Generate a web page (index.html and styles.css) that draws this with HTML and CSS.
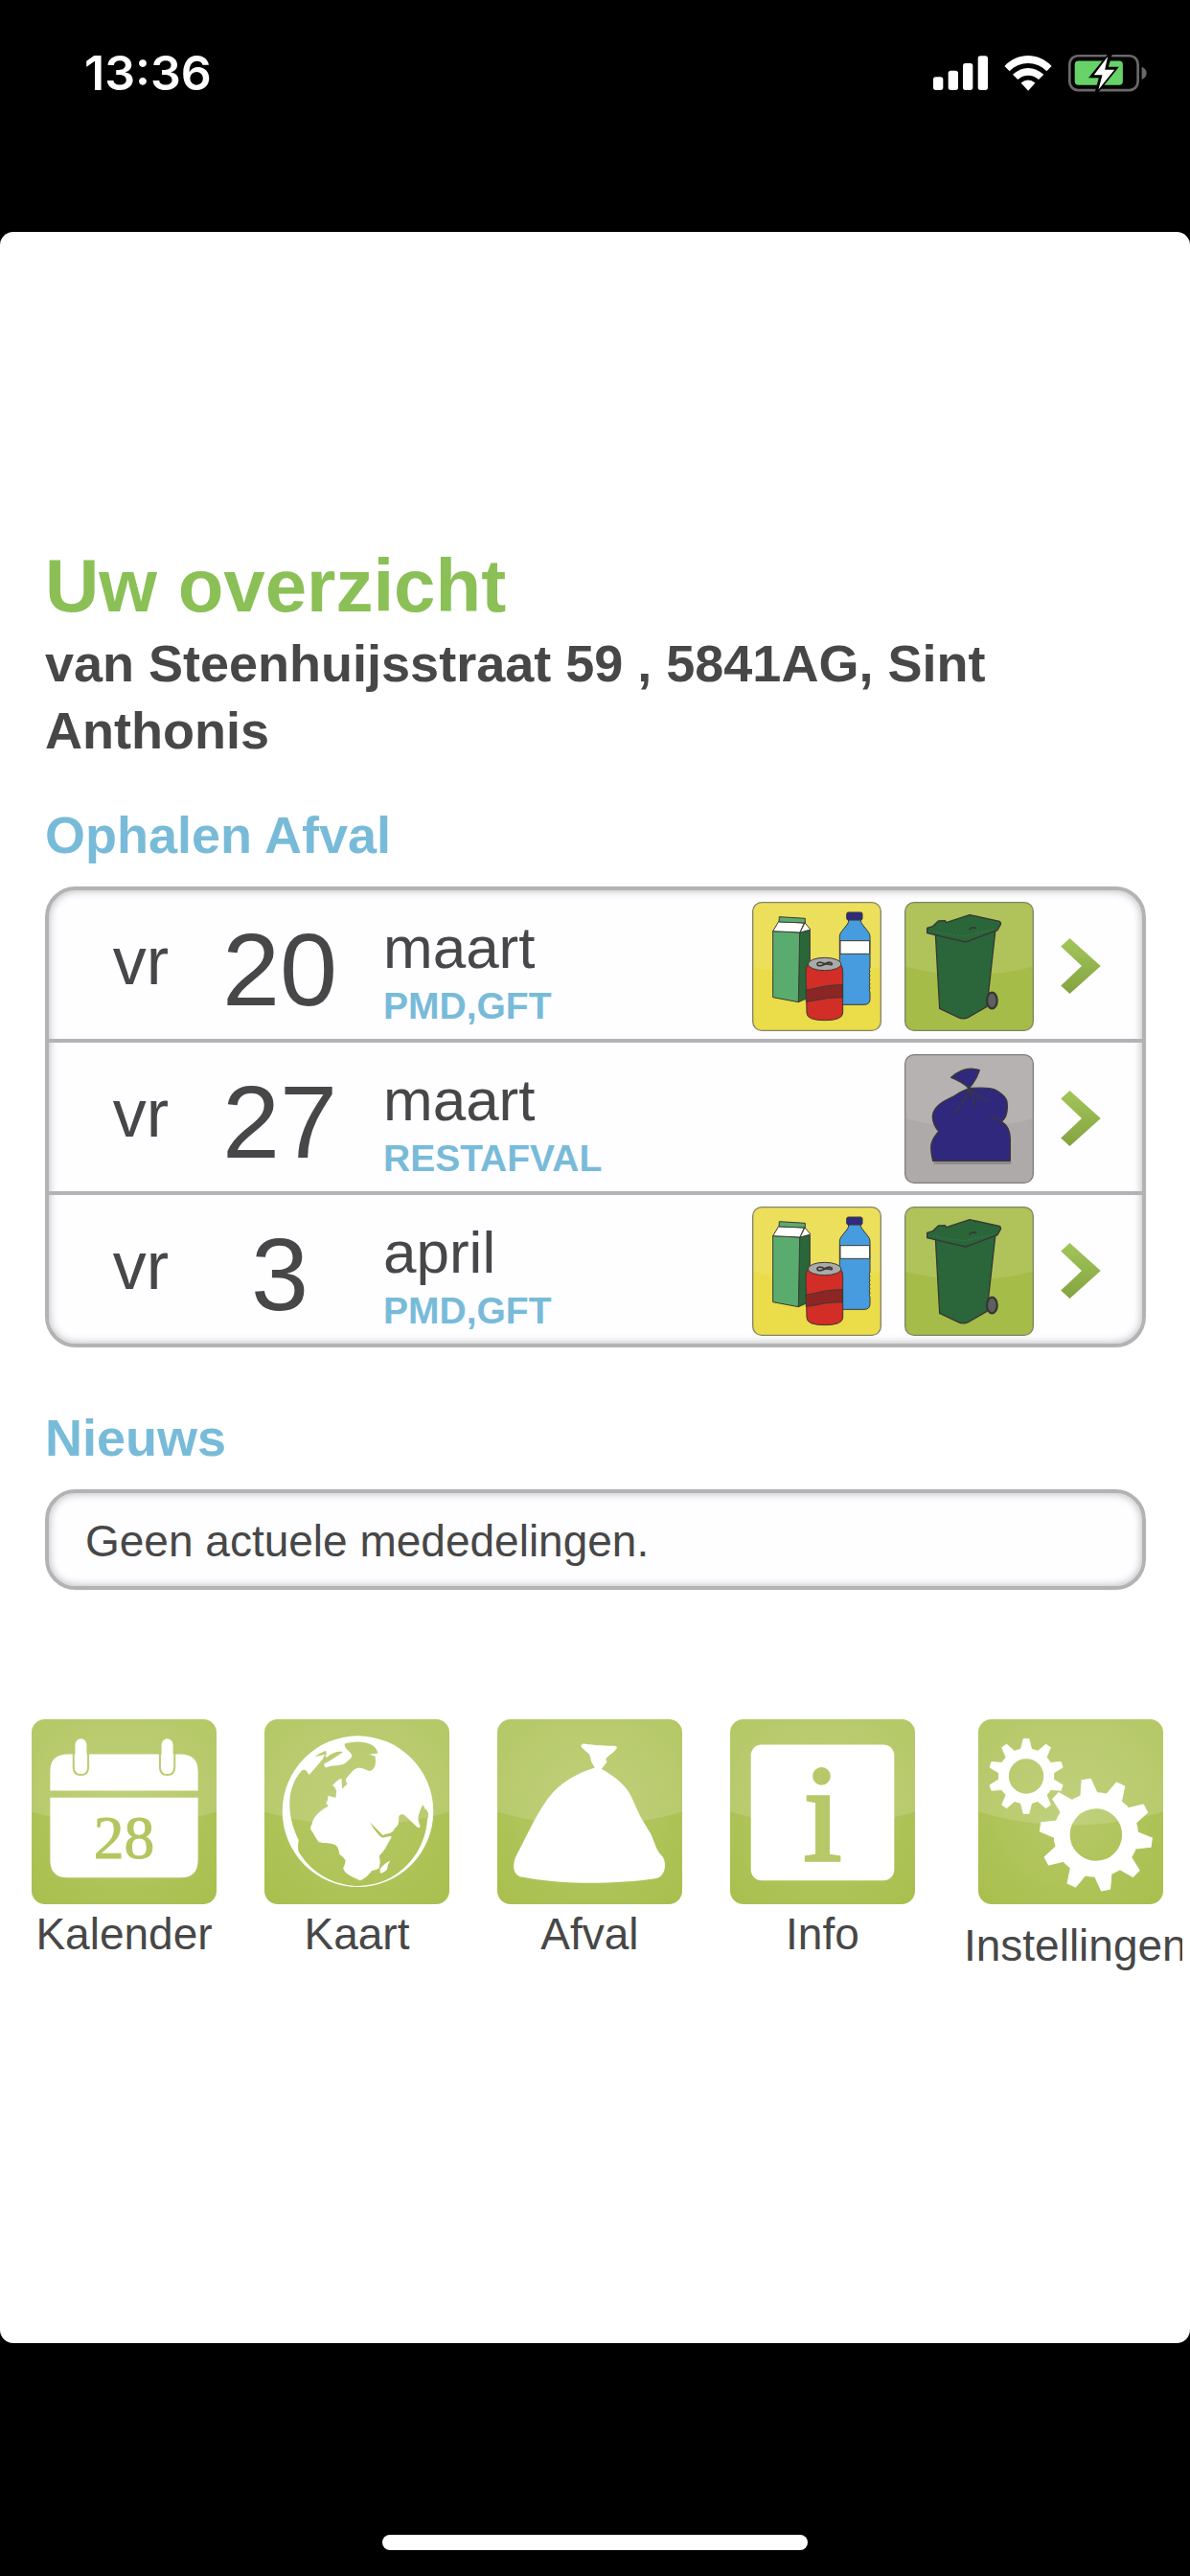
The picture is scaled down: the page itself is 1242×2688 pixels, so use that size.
FILE: index.html
```html
<!DOCTYPE html>
<html lang="nl">
<head>
<meta charset="utf-8">
<meta name="viewport" content="width=device-width, initial-scale=1">
<title>Uw overzicht</title>
<link rel="stylesheet" href="styles.css">
</head>
<body>
<svg class="defs" aria-hidden="true">
  <defs>
    <linearGradient id="arrow-fill" x1="0" y1="0" x2="0" y2="1">
      <stop offset="0" stop-color="#a3c65a"/><stop offset="1" stop-color="#83a340"/>
    </linearGradient>
    <radialGradient id="tile-fill" cx="0.5" cy="0.5" r="0.72">
      <stop offset="0" stop-color="#b6c868"/><stop offset="0.6" stop-color="#aec357"/><stop offset="1" stop-color="#a8be4c"/>
    </radialGradient>
    <symbol id="tile" viewBox="0 0 578 578">
      <rect width="578" height="578" rx="42" fill="url(#tile-fill)"/>
      <path d="M0 42Q0 0 42 0H536Q578 0 578 42V289Q440 331 289 331T0 289Z" fill="#fff" opacity=".14"/>
    </symbol>
    <symbol id="arrow" viewBox="0 0 126 176">
      <path d="M28 0 126 88 28 176 0 150 66 88 0 26Z" fill="url(#arrow-fill)"/>
    </symbol>
    <symbol id="pmd" viewBox="43 32 405 405">
      <rect x="45" y="34" width="401" height="401" rx="28" fill="#ebdc49"/>
      <path d="M45 62Q45 34 73 34H418Q446 34 446 62V235Q350 260 245 260T45 235Z" fill="#ecdf5b"/>
      <g stroke="#3a3a33" stroke-width="3" stroke-linejoin="round">
        <path d="M192 127 224 122V330L188 346Z" fill="#2a6639"/>
        <path d="M108 124 192 128 188 346 108 331Z" fill="#5aab6e"/>
        <path d="M108 124 126 94 206 98 193 128Z" fill="#fff"/>
        <path d="M193 128 208 98 226 119Z" fill="#fff"/>
        <path d="M128 79 209 84V98L127 95Z" fill="#5aab6e"/>
        <path d="M345 88H383Q383 98 389 104L405 124Q412 132 412 140V238Q407 244 412 250 407 257 412 263 407 270 412 276 407 283 412 289 407 296 412 302 407 309 412 316V336Q412 354 394 354H317V140Q317 132 324 124L340 104Q346 97 345 88Z" fill="#469cde"/>
        <path d="M319 154H411V195H319Z" fill="#fff"/>
        <rect x="339" y="65" width="49" height="24" rx="5" fill="#302a80"/>
        <path d="M218 228Q210 238 211 262L214 380Q214 403 270 403T327 380V252Q327 236 320 228Z" fill="#d22d26"/>
        <path d="M211 308C250 304 260 293 326 292V332C275 330 255 340 212 345Z" fill="#8c2624"/>
        <ellipse cx="270" cy="227" rx="52" ry="20" fill="#aaa"/>
        <path d="M270 226C258 220 247 220 247 227S258 234 270 228 293 234 293 227 282 220 270 226Z" fill="#aaa" stroke-width="5"/>
      </g>
      <rect x="45" y="34" width="401" height="401" rx="28" fill="none" stroke="#85836c" stroke-width="4"/>
    </symbol>
    <symbol id="gft" viewBox="521 32 405 405">
      <rect x="523" y="34" width="401" height="401" rx="28" fill="#a5bc48"/>
      <path d="M523 62Q523 34 551 34H896Q924 34 924 62V235Q830 260 723 260T523 235Z" fill="#b0c35b"/>
      <g stroke="#363836" stroke-width="4" stroke-linejoin="round">
        <path d="M618 130 806 118 779 360 722 393Q705 402 688 393L631 366Z" fill="#2a6639"/>
        <path d="M592 114 609 109 627 92 648 91 652 97 725 73 818 93Q824 97 822 103L812 121 712 158 592 130Z" fill="#2a6639"/>
        <ellipse cx="795" cy="341" rx="16" ry="25" fill="#5f5f5f" stroke-width="7"/>
      </g>
      <path d="M610 124Q660 136 712 139L800 118" fill="none" stroke="#47724f" stroke-width="3" stroke-dasharray="6 5"/>
      <path d="M724 120Q731 109 746 115" fill="none" stroke="#363836" stroke-width="5"/>
      <rect x="523" y="34" width="401" height="401" rx="28" fill="none" stroke="#7e8469" stroke-width="4"/>
    </symbol>
    <symbol id="rest" viewBox="40 30 405 405">
      <rect x="42" y="32" width="401" height="401" rx="28" fill="#aeaaa9"/>
      <path d="M42 60Q42 32 70 32H415Q443 32 443 60V231Q350 257 243 257T42 231Z" fill="#b6b2b1"/>
      <path d="M132 366H374V375H132Z" fill="#8f8b8b"/>
      <g stroke="#3b3937" stroke-width="4" stroke-linejoin="round" stroke-linecap="round">
        <path d="M242 137C270 135 305 134 320 140S359 163 361 180 364 226 344 241C362 252 371 270 371 295V364H129C122 335 121 318 126 305Q131 290 147 272C129 250 125 232 130 214 138 190 160 178 194 162Q218 146 242 137Z" fill="#30287d"/>
        <path d="M242 137Q222 117 186 103Q229 65 275 80Q267 108 242 137Z" fill="#30287d"/>
        <path d="M242 139Q224 185 194 217M242 139 260 192M244 141Q270 164 303 177M310 226 344 241" fill="none"/>
      </g>
      <rect x="42" y="32" width="401" height="401" rx="28" fill="none" stroke="#807e7d" stroke-width="4"/>
    </symbol>
    <path id="tooth-small" d="M-17-84-9-117H9L17-84Z"/>
    <path id="tooth-big" d="M-26-128-14-175H14L26-128Z"/>
  </defs>
</svg>

<header class="status-bar">
  <time class="clock">13:36</time>
  <div class="status-icons">
    <svg class="signal" viewBox="0 0 171 108" aria-label="Signaal"><g fill="#fff"><rect y="67" width="31" height="41" rx="8"/><rect x="47" y="47" width="31" height="61" rx="8"/><rect x="93" y="24" width="31" height="84" rx="8"/><rect x="140" y="1" width="31" height="107" rx="8"/></g></svg>
    <svg class="wifi" viewBox="320 81 151 112" aria-label="Wifi"><g fill="#fff"><path d="M321 114C363 70 428 70 470 114L454 130C421 97 370 97 337 130Z"/><path d="M347 141C375 113 416 113 445 141L429 157C410 139 382 139 363 157Z"/><path d="M373 167Q396 149 418 167L396 192Z"/></g></svg>
    <svg class="battery" viewBox="521 79 245 118" aria-label="Batterij laadt op"><rect x="525" y="85" width="213" height="107" rx="26" fill="none" stroke="#69696b" stroke-width="8"/><rect x="541" y="101" width="150" height="75" rx="12" fill="#66d267"/><path d="M750 119Q765 125 765 139T750 159Z" fill="#69696b"/><path d="M644 80 584 154H616L604 198H615L679 119H646L658 80Z" fill="#000"/><path d="M644 87 601 145H627L615 190 665 128H635Z" fill="#fff"/></svg>
  </div>
</header>

<main class="page">
  <div class="content">
    <h1>Uw overzicht</h1>
    <p class="address">van Steenhuijsstraat 59 , 5841AG, Sint Anthonis</p>

    <h2>Ophalen Afval</h2>
    <ul class="card">
      <li><a class="pickup" href="#20-maart">
        <span class="weekday">vr</span><span class="day">20</span>
        <span class="detail"><span class="month">maart</span><span class="kinds">PMD,GFT</span></span>
        <span class="bins"><svg class="bin"><use href="#pmd"/></svg><svg class="bin"><use href="#gft"/></svg></span>
        <svg class="arrow"><use href="#arrow"/></svg>
      </a></li>
      <li><a class="pickup" href="#27-maart">
        <span class="weekday">vr</span><span class="day">27</span>
        <span class="detail"><span class="month">maart</span><span class="kinds">RESTAFVAL</span></span>
        <span class="bins"><svg class="bin"><use href="#rest"/></svg></span>
        <svg class="arrow"><use href="#arrow"/></svg>
      </a></li>
      <li><a class="pickup" href="#3-april">
        <span class="weekday">vr</span><span class="day">3</span>
        <span class="detail"><span class="month">april</span><span class="kinds">PMD,GFT</span></span>
        <span class="bins"><svg class="bin"><use href="#pmd"/></svg><svg class="bin"><use href="#gft"/></svg></span>
        <svg class="arrow"><use href="#arrow"/></svg>
      </a></li>
    </ul>

    <h2 class="news-title">Nieuws</h2>
    <p class="card news">Geen actuele mededelingen.</p>
  </div>

  <nav class="menu">
    <a href="#kalender">
      <svg class="tile" viewBox="38 43 578 578"><use href="#tile" x="38" y="43" width="578" height="578"/><path d="M96 266V206Q96 152 150 152H504Q558 152 558 206V266ZM96 288H558V484Q558 538 504 538H150Q96 538 96 484Z" fill="#fff"/><g fill="#fff" stroke="#bccb72" stroke-width="6"><path d="M169 150V192Q169 217 192 217T215 192V150ZM439 150V192Q439 217 462 217T485 192V150Z"/></g><rect x="174" y="104" width="36" height="109" rx="18" fill="#fff"/><rect x="444" y="104" width="36" height="109" rx="18" fill="#fff"/><text class="tile-date" x="327" y="478" text-anchor="middle">28</text></svg>
      <span>Kalender</span>
    </a>
    <a href="#kaart">
      <svg class="tile" viewBox="768 43 578 578"><use href="#tile" x="768" y="43" width="578" height="578"/>
        <path fill="#fff" fill-rule="evenodd" d="M1060 95A236 236 0 1 1 1060 567 236 236 0 1 1 1060 95ZM1018 120C1050 108 1115 108 1123 149L1095 153 1114 158Q1117 175 1114 188 1107 203 1098 204C1085 204 1078 193 1062 195 1045 197 1034 217 1022 230Q1021 238 1027 245L1011 260 1009 228Q998 230 981 250 990 255 993 267L991 288Q980 286 968 282C964 290 969 296 960 304L968 315C945 327 921 344 916 372Q910 380 912 387C921 397 928 415 937 426 955 432 975 427 990 436 1000 442 1001 460 1003 465Q1015 473 1021 483 1022 492 1014 508C1018 528 1045 535 1066 547 1085 540 1095 527 1104 516Q1120 514 1127 508 1132 490 1127 470C1145 453 1153 432 1166 410 1155 406 1146 413 1135 413 1119 400 1105 380 1098 365L1138 405C1155 399 1170 400 1174 385 1190 372 1187 370 1188 346 1196 336 1205 340 1211 348L1246 381Q1254 385 1255 377 1247 360 1249 348 1255 320 1264 310L1270 323Q1282 329 1280 347L1277 356A217 222 0 0 1 875 457Q871 445 875 420C862 395 845 350 847 305 846 265 864 224 885 203 898 196 901 208 908 217L950 168Q954 155 960 152 948 156 925 160 940 149 960 141L962 152Q957 160 962 162C980 151 990 142 1014 145 998 157 980 169 955 182Q952 187 960 194C985 185 1005 190 1020 181 1030 170 1042 166 1041 155 1037 142 1020 139 1018 120Z"/><path fill="#fff" d="M1161 485Q1143 493 1130 510 1127 518 1132 525 1143 520 1151 513 1153 497 1161 485Z"/>
      </svg>
      <span>Kaart</span>
    </a>
    <a href="#afval">
      <svg class="tile" viewBox="58 43 578 578"><use href="#tile" x="58" y="43" width="578" height="578"/><path fill="#fff" d="M326 119C345 122 385 125 421 126Q434 127 432 133C422 149 406 155 397 167L401 176 384 198C418 218 450 240 470 272 483 295 495 328 510 355L538 402C546 418 552 442 562 458L576 474C588 496 584 535 552 541 430 558 265 562 129 535 106 525 106 498 115 474L142 421C168 370 190 326 219 287 255 240 305 213 363 194L352 176Q350 162 346 153L322 131Q317 122 326 119Z"/></svg>
      <span>Afval</span>
    </a>
    <a href="#info">
      <svg class="tile" viewBox="787 43 578 578"><use href="#tile" x="787" y="43" width="578" height="578"/><rect x="852" y="122" width="448" height="425" rx="34" fill="#fff"/><text class="tile-info" x="1076" y="484" text-anchor="middle">i</text></svg>
      <span>Info</span>
    </a>
    <a class="settings" href="#instellingen">
      <svg class="tile" viewBox="180 43 578 578"><use href="#tile" x="180" y="43" width="578" height="578"/>
        <g transform="translate(330 221)" fill="#fff" stroke="#fff" stroke-width="2" stroke-linejoin="round"><circle r="71" fill="none" stroke-width="33"/><use href="#tooth-small"/><use href="#tooth-small" transform="rotate(36)"/><use href="#tooth-small" transform="rotate(72)"/><use href="#tooth-small" transform="rotate(108)"/><use href="#tooth-small" transform="rotate(144)"/><use href="#tooth-small" transform="rotate(180)"/><use href="#tooth-small" transform="rotate(216)"/><use href="#tooth-small" transform="rotate(252)"/><use href="#tooth-small" transform="rotate(288)"/><use href="#tooth-small" transform="rotate(324)"/></g>
        <g transform="translate(548 404) rotate(-10)" fill="#fff" stroke="#fff" stroke-width="3" stroke-linejoin="round"><circle r="107" fill="none" stroke-width="51"/><use href="#tooth-big"/><use href="#tooth-big" transform="rotate(36)"/><use href="#tooth-big" transform="rotate(72)"/><use href="#tooth-big" transform="rotate(108)"/><use href="#tooth-big" transform="rotate(144)"/><use href="#tooth-big" transform="rotate(180)"/><use href="#tooth-big" transform="rotate(216)"/><use href="#tooth-big" transform="rotate(252)"/><use href="#tooth-big" transform="rotate(288)"/><use href="#tooth-big" transform="rotate(324)"/></g>
      </svg>
      <span>Instellingen</span>
    </a>
  </nav>
</main>

<footer class="home-bar"><div class="home-indicator"></div></footer>
</body>
</html>
```

FILE: styles.css
```css
* {
  box-sizing: border-box;
}

body {
  display: flex;
  flex-direction: column;
  min-height: 100vh;
  margin: 0;
  background: #000;
  color: #474747;
  font-family: "Liberation Sans", Arial, sans-serif;
}

a {
  color: inherit;
  text-decoration: none;
}

svg {
  display: block;
  flex: none;
}

.defs {
  position: absolute;
  width: 0;
  height: 0;
}

/* Status bar */
.status-bar {
  display: flex;
  justify-content: space-between;
  align-items: flex-start;
  height: 242px;
  padding: 46px 45px 0 88px;
}

.clock {
  color: #fff;
  font: 600 50px/60px Inter, sans-serif;
}

.status-icons {
  display: flex;
  align-items: center;
  gap: 17px;
  height: 60px;
}

.signal {
  width: 57px;
  height: 36px;
}

.wifi {
  width: 50px;
  height: 37px;
}

.battery {
  width: 82px;
  height: 40px;
}

/* Page */
.page {
  flex: 1;
  padding-top: 323px;
  border-radius: 14px;
  background: #fff;
}

.content {
  padding: 0 46px 0 47px;
}

h1 {
  margin: 0;
  color: #8ac055;
  font-size: 78px;
  line-height: 92px;
}

.address {
  margin: 0;
  font-size: 54px;
  font-weight: bold;
  line-height: 70px;
}

h2 {
  margin: 39px 0 19px;
  color: #78bbd9;
  font-size: 54px;
  line-height: 70px;
}

.news-title {
  margin-top: 59px;
}

.card {
  margin: 0;
  padding: 0;
  border: 4px solid #b3b3b3;
  border-radius: 32px;
  background: #fefdff;
  box-shadow: inset 0 0 10px rgba(0, 0, 0, 0.3);
  list-style: none;
}

.card li + li {
  border-top: 4px solid #b3b3b3;
}

.pickup {
  display: flex;
  align-items: flex-start;
  padding: 0 43px 8px 24px;
}

.weekday {
  width: 144px;
  margin-top: 34px;
  font-size: 70px;
  line-height: 80px;
  text-align: center;
}

.day {
  width: 146px;
  margin-top: 23px;
  font-size: 108px;
  line-height: 120px;
  text-align: center;
}

.detail {
  display: flex;
  flex: 1;
  flex-direction: column;
  margin: 24px 0 0 35px;
}

.month {
  font-size: 62px;
  line-height: 72px;
}

.kinds {
  color: #78bbd9;
  font-size: 39px;
  font-weight: bold;
  line-height: 50px;
}

.bins {
  display: flex;
  gap: 24px;
  margin: 12px 28px 0 0;
}

.bin {
  width: 135px;
  height: 135px;
}

.arrow {
  width: 42px;
  height: 58px;
  margin-top: 50px;
}

.news {
  padding: 23px 38px 20px;
  font-size: 46px;
  line-height: 54px;
}

/* Menu: the last column is a little wider and its label runs off the edge */
.menu {
  display: grid;
  grid-template-columns: repeat(4, minmax(0, 22fr)) minmax(0, 23fr);
  margin: 135px 8px 0;
  overflow: hidden;
}

.menu a {
  display: flex;
  flex-direction: column;
  align-items: center;
  gap: 4px;
  font-size: 46px;
  line-height: 54px;
}

.menu .settings {
  gap: 16px;
  padding-left: 22px;
}

.settings span {
  align-self: stretch;
  padding-left: 4px;
}

.tile {
  width: 193px;
  height: 193px;
}

.tile-date {
  fill: #b3c660;
  stroke: #b3c660;
  stroke-width: 3px;
  font: 190px "Liberation Serif", serif;
}

.tile-info {
  fill: #b6c868;
  stroke: #b6c868;
  stroke-width: 10px;
  font: 430px "Liberation Serif", serif;
}

/* Home indicator */
.home-bar {
  display: flex;
  justify-content: center;
  align-items: flex-end;
  height: 243px;
  padding-bottom: 27px;
}

.home-indicator {
  width: 444px;
  height: 16px;
  border-radius: 8px;
  background: #fff;
}
```
